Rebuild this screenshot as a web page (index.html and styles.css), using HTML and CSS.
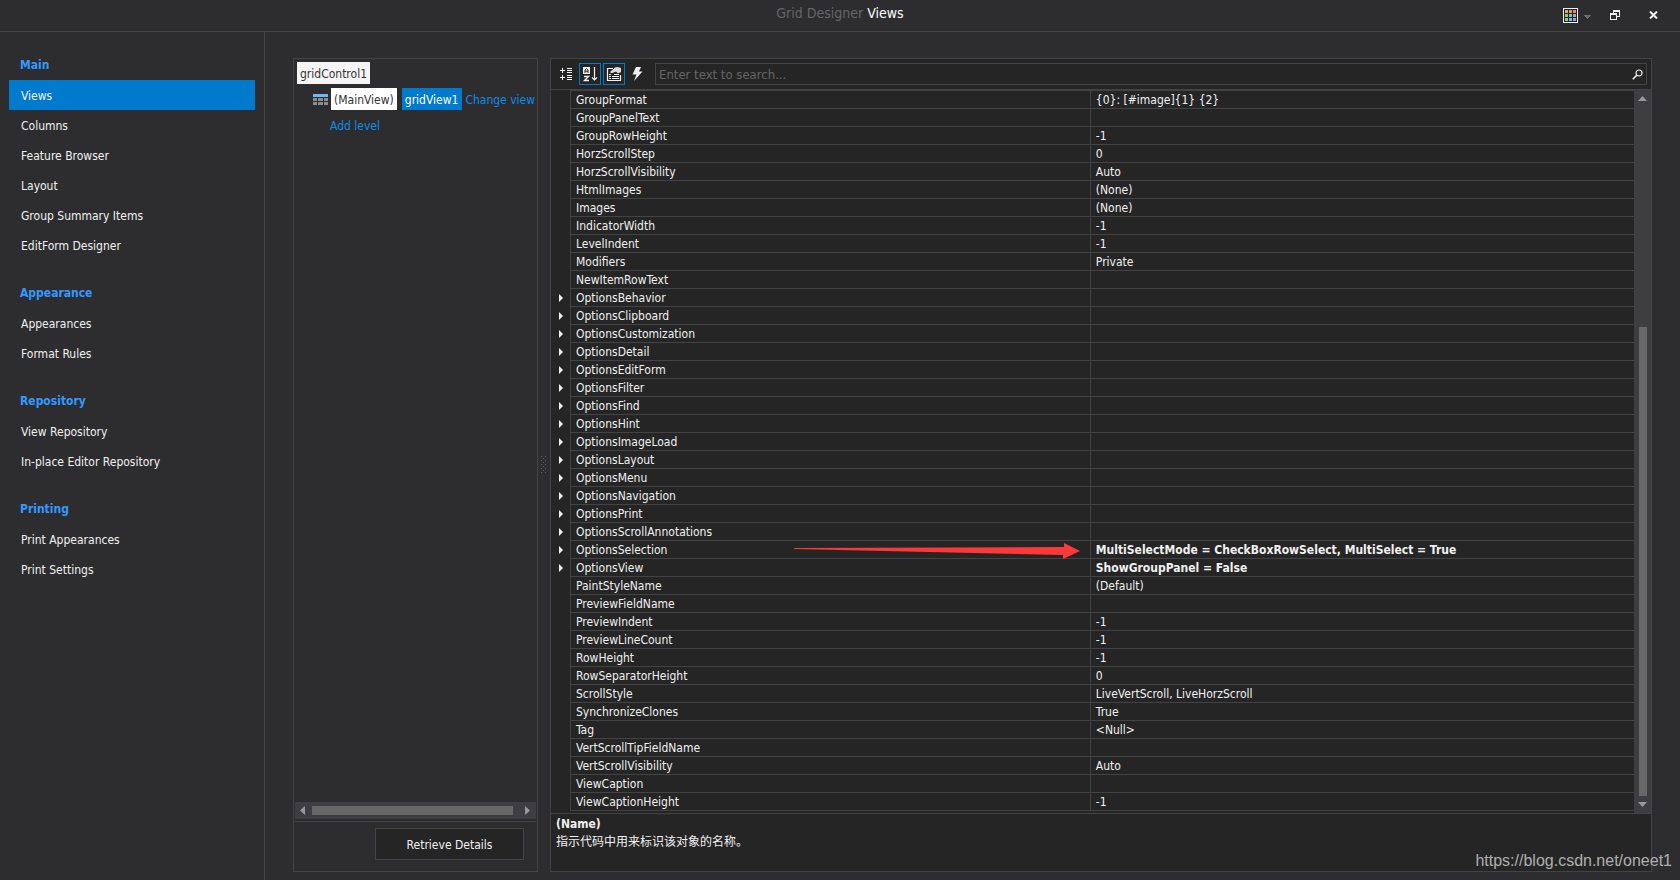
FILE: index.html
```html
<!DOCTYPE html>
<html lang="en">
<head>
<meta charset="utf-8">
<title>Grid Designer Views</title>
<link rel="stylesheet" href="styles.css">
</head>
<body>
<header class="titlebar">
  <h1 class="title"><span class="title-app">Grid Designer</span> Views</h1>
  <div class="window-buttons">
    <button class="skin-button" type="button" aria-label="Skins">
      <svg width="28" height="15" viewBox="0 0 28 15" shape-rendering="crispEdges">
        <rect x=".5" y=".5" width="14" height="14" fill="#252525" stroke="#f1f1f1"/>
        <path fill="#dcaa6c" d="M2 2h3v3H2z"/><path fill="#e09a68" d="M6 2h3v3H6z"/><path fill="#e88878" d="M10 2h3v3h-3z"/>
        <path fill="#b4bc70" d="M2 6h3v3H2z"/><path fill="#74c4b8" d="M6 6h3v3H6z"/><path fill="#a8a0c8" d="M10 6h3v3h-3z"/>
        <path fill="#8cd080" d="M2 10h3v3H2z"/><path fill="#74bcf8" d="M6 10h3v3H6z"/><path fill="#84a8e0" d="M10 10h3v3h-3z"/>
        <path fill="#6a6a6c" d="M21 7h7v1h-1v1h-1v1h-1v1h-1v-1h-1V9h-1V8h-1z"/>
      </svg>
    </button>
    <button class="restore-button" type="button" aria-label="Restore">
      <svg width="10" height="10" viewBox="0 0 10 10" shape-rendering="crispEdges">
        <path fill="#f1f1f1" d="M3 0h7v7H7V6h2V2H4v1H3zM0 3h7v7H0zM1 5v4h5V5z"/>
      </svg>
    </button>
    <button class="close-button" type="button" aria-label="Close">
      <svg width="9" height="8" viewBox="0 0 9 8">
        <path d="M1 .5l7 7M8 .5l-7 7" stroke="#f1f1f1" stroke-width="2"/>
      </svg>
    </button>
  </div>
</header>

<div class="workspace">
  <nav class="sidebar">
    <h2 class="nav-heading">Main</h2>
    <a class="nav-item nav-item-active" href="#">Views</a>
    <a class="nav-item" href="#">Columns</a>
    <a class="nav-item" href="#">Feature Browser</a>
    <a class="nav-item" href="#">Layout</a>
    <a class="nav-item" href="#">Group Summary Items</a>
    <a class="nav-item" href="#">EditForm Designer</a>
    <h2 class="nav-heading">Appearance</h2>
    <a class="nav-item" href="#">Appearances</a>
    <a class="nav-item" href="#">Format Rules</a>
    <h2 class="nav-heading">Repository</h2>
    <a class="nav-item" href="#">View Repository</a>
    <a class="nav-item" href="#">In-place Editor Repository</a>
    <h2 class="nav-heading">Printing</h2>
    <a class="nav-item" href="#">Print Appearances</a>
    <a class="nav-item" href="#">Print Settings</a>
  </nav>

  <main class="content">
    <section class="levels">
      <div class="level-tree">
        <div class="level-root"><button class="chip chip-root" type="button">gridControl1</button></div>
        <div class="level-view">
          <svg class="grid-icon" width="15" height="11" viewBox="0 0 15 11" shape-rendering="crispEdges">
            <path fill="#6cb8fc" d="M0 0h15v3H0z"/>
            <path fill="#8c8c8e" d="M0 4h4v3H0zM5 4h5v3H5zM11 4h4v3h-4zM0 8h4v3H0zM5 8h5v3H5zM11 8h4v3h-4z"/>
          </svg>
          <button class="chip chip-main" type="button">(MainView)</button>
          <button class="chip chip-selected" type="button">gridView1</button>
          <a class="level-link" href="#">Change view</a>
        </div>
        <div class="level-add"><a class="level-link" href="#">Add level</a></div>
      </div>
      <div class="hscroll">
        <svg width="5" height="9" viewBox="0 0 5 9"><path fill="#999" d="M5 0v9L0 4.500z"/></svg>
        <div class="hscroll-track"><div class="hscroll-thumb"></div></div>
        <svg width="5" height="9" viewBox="0 0 5 9"><path fill="#999" d="M0 0v9l5-4.500z"/></svg>
      </div>
      <div class="levels-footer"><button class="retrieve" type="button">Retrieve Details</button></div>
    </section>

    <div class="splitter">
      <svg width="6" height="18" viewBox="0 0 6 18" shape-rendering="crispEdges">
        <path fill="#606064" d="M0 0h1v1H0zM4 0h1v1H4zM2 2h1v1H2zM0 4h1v1H0zM4 4h1v1H4zM2 6h1v1H2zM0 8h1v1H0zM4 8h1v1H4zM2 10h1v1H2zM0 12h1v1H0zM4 12h1v1H4zM2 14h1v1H2zM0 16h1v1H0zM4 16h1v1H4z"/>
      </svg>
    </div>

    <section class="properties">
      <div class="toolbar">
        <button class="tool" type="button" aria-label="Categorized">
          <svg width="16" height="16" viewBox="0 0 16 16" shape-rendering="crispEdges">
            <path fill="#f1f1f1" d="M4 2h1v2h2v1H5v2H4V5H2V4h2zM4 9h1v2h2v1H5v2H4v-2H2v-1h2zM9 2h5v1H9zM9 4h5v1H9zM9 6h5v1H9zM9 9h5v1H9zM9 11h5v1H9zM9 13h5v1H9z"/>
          </svg>
        </button>
        <button class="tool tool-on" type="button" aria-label="Alphabetical">
          <svg width="16" height="16" viewBox="0 0 16 16">
            <path fill="#f1f1f1" d="M1 1h7v7H1z"/>
            <path d="M3 7V4L4.500 2.500 6 4v3M3 5.200h3" fill="none" stroke="#252525"/>
            <path d="M2 10.500h4.500L2.500 14.500H7" fill="none" stroke="#f1f1f1" stroke-width="1.400"/>
            <path d="M12.500 1v13M10 11.500l2.500 2.500 2.500-2.500" fill="none" stroke="#f1f1f1" stroke-width="1.200"/>
          </svg>
        </button>
        <button class="tool tool-on" type="button" aria-label="Property description">
          <svg width="16" height="16" viewBox="0 0 16 16">
            <path d="M7 2.500H1.500v12h13V9" fill="none" stroke="#f1f1f1" stroke-width="1.200"/>
            <path d="M3 8h2v1H3zM8 8h5v1H8zM3 10h2v1H3zM6 10h7v1H6zM3 12h2v1H3zM6 12h7v1H6z" fill="#f1f1f1"/>
            <path d="M4 6l5-4.500 2.500-.5L15 2v4l-3 1.500-2-2L6.500 7 5 7z" fill="#dcdcdc"/>
          </svg>
        </button>
        <button class="tool" type="button" aria-label="Events">
          <svg width="16" height="16" viewBox="0 0 16 16">
            <path d="M6 1H11L9 5.500h3.500L4 15l2.500-6.500H2.500z" fill="#f1f1f1"/>
          </svg>
        </button>
        <div class="search">
          <input class="search-input" type="text" placeholder="Enter text to search..." aria-label="Search properties">
          <svg width="11" height="11" viewBox="0 0 11 11">
            <circle cx="7" cy="4" r="3" fill="none" stroke="#f1f1f1" stroke-width="1.200"/>
            <path d="M5 6L.8 10.200" stroke="#f1f1f1" stroke-width="1.600"/>
          </svg>
        </div>
      </div>

      <div class="grid-area">
        <table class="grid">
          <colgroup><col class="col-mark"><col class="col-name"><col></colgroup>
          <tbody>
            <tr><td></td><th>GroupFormat</th><td>{0}: [#image]{1} {2}</td></tr>
            <tr><td></td><th>GroupPanelText</th><td></td></tr>
            <tr><td></td><th>GroupRowHeight</th><td>-1</td></tr>
            <tr><td></td><th>HorzScrollStep</th><td>0</td></tr>
            <tr><td></td><th>HorzScrollVisibility</th><td>Auto</td></tr>
            <tr><td></td><th>HtmlImages</th><td>(None)</td></tr>
            <tr><td></td><th>Images</th><td>(None)</td></tr>
            <tr><td></td><th>IndicatorWidth</th><td>-1</td></tr>
            <tr><td></td><th>LevelIndent</th><td>-1</td></tr>
            <tr><td></td><th>Modifiers</th><td>Private</td></tr>
            <tr><td></td><th>NewItemRowText</th><td></td></tr>
            <tr class="expandable"><td></td><th>OptionsBehavior</th><td></td></tr>
            <tr class="expandable"><td></td><th>OptionsClipboard</th><td></td></tr>
            <tr class="expandable"><td></td><th>OptionsCustomization</th><td></td></tr>
            <tr class="expandable"><td></td><th>OptionsDetail</th><td></td></tr>
            <tr class="expandable"><td></td><th>OptionsEditForm</th><td></td></tr>
            <tr class="expandable"><td></td><th>OptionsFilter</th><td></td></tr>
            <tr class="expandable"><td></td><th>OptionsFind</th><td></td></tr>
            <tr class="expandable"><td></td><th>OptionsHint</th><td></td></tr>
            <tr class="expandable"><td></td><th>OptionsImageLoad</th><td></td></tr>
            <tr class="expandable"><td></td><th>OptionsLayout</th><td></td></tr>
            <tr class="expandable"><td></td><th>OptionsMenu</th><td></td></tr>
            <tr class="expandable"><td></td><th>OptionsNavigation</th><td></td></tr>
            <tr class="expandable"><td></td><th>OptionsPrint</th><td></td></tr>
            <tr class="expandable"><td></td><th>OptionsScrollAnnotations</th><td></td></tr>
            <tr class="expandable"><td></td><th class="pointed">OptionsSelection<svg class="pointer" width="286" height="16" viewBox="0 0 286 16"><path fill="#fc3838" d="M0 5l270-1V0l16 8-17 8v-4L0 6z"/></svg></th><td class="changed">MultiSelectMode = CheckBoxRowSelect, MultiSelect = True</td></tr>
            <tr class="expandable"><td></td><th>OptionsView</th><td class="changed">ShowGroupPanel = False</td></tr>
            <tr><td></td><th>PaintStyleName</th><td>(Default)</td></tr>
            <tr><td></td><th>PreviewFieldName</th><td></td></tr>
            <tr><td></td><th>PreviewIndent</th><td>-1</td></tr>
            <tr><td></td><th>PreviewLineCount</th><td>-1</td></tr>
            <tr><td></td><th>RowHeight</th><td>-1</td></tr>
            <tr><td></td><th>RowSeparatorHeight</th><td>0</td></tr>
            <tr><td></td><th>ScrollStyle</th><td>LiveVertScroll, LiveHorzScroll</td></tr>
            <tr><td></td><th>SynchronizeClones</th><td>True</td></tr>
            <tr><td></td><th>Tag</th><td>&lt;Null&gt;</td></tr>
            <tr><td></td><th>VertScrollTipFieldName</th><td></td></tr>
            <tr><td></td><th>VertScrollVisibility</th><td>Auto</td></tr>
            <tr><td></td><th>ViewCaption</th><td></td></tr>
            <tr><td></td><th>ViewCaptionHeight</th><td>-1</td></tr>
          </tbody>
        </table>
        <div class="vscroll">
          <div class="vscroll-end"><svg width="9" height="5" viewBox="0 0 9 5"><path fill="#999" d="M0 5h9L4.500 0z"/></svg></div>
          <div class="vscroll-track"><div class="vscroll-thumb"></div></div>
          <div class="vscroll-end"><svg width="9" height="5" viewBox="0 0 9 5"><path fill="#999" d="M0 0h9L4.500 5z"/></svg></div>
        </div>
      </div>

      <div class="description">
        <strong class="description-name">(Name)</strong>
        <p class="description-text" lang="zh-CN">指示代码中用来标识该对象的名称。</p>
      </div>
    </section>
  </main>
</div>
<div class="watermark">https://blog.csdn.net/oneet1</div>
</body>
</html>
```
FILE: styles.css
```css
* { box-sizing: border-box; }

body {
  margin: 0;
  min-height: 100vh;
  display: flex;
  flex-direction: column;
  position: relative;
  background: #2d2d30;
  color: #f1f1f1;
  font: 12px/18px "DejaVu Sans Condensed", "Noto Sans CJK SC", sans-serif;
}

svg { display: block; flex: none; }
a { text-decoration: none; }
button {
  font: inherit;
  color: inherit;
  background: none;
  border: 0;
  padding: 0;
}

/* Title bar */
.titlebar {
  display: grid;
  grid-template-columns: 1fr auto 1fr;
  align-items: center;
  height: 32px;
  padding-bottom: 6px;
  border-bottom: 1px solid #434346;
}
.title {
  grid-column: 2;
  margin: 0;
  font-size: 14px;
  font-weight: 400;
  color: #fff;
}
.title-app { color: #656565; }
.window-buttons {
  display: flex;
  justify-content: flex-end;
  align-items: center;
  padding: 5px 22px 0 0;
}
.restore-button { margin-left: 19px; }
.close-button { margin-left: 29px; }

.workspace { flex: 1; display: flex; }

/* Navigation */
.sidebar {
  flex: none;
  width: 265px;
  padding: 0 9px;
  border-right: 1px solid #434346;
}
.nav-heading {
  margin: 0;
  padding: 18px 11px 0;
  font-size: 12px;
  line-height: 30px;
  color: #3399ff;
}
.nav-item {
  display: block;
  padding: 2px 12px 0;
  line-height: 28px;
  color: #f1f1f1;
}
.nav-item-active { background: #007acc; }

.content {
  flex: 1;
  min-width: 0;
  display: flex;
  padding: 26px 28px 8px;
}

/* Level tree */
.levels {
  flex: none;
  width: 245px;
  display: flex;
  flex-direction: column;
  border: 1px solid #434346;
}
.level-tree {
  flex: 1;
  display: flex;
  flex-direction: column;
  gap: 4px;
  padding: 3px 0 0 3px;
}
.level-view { display: flex; align-items: center; }
.level-add { padding-left: 33px; line-height: 22px; }
.grid-icon { margin: 0 3px 0 16px; }
.chip {
  height: 22px;
  padding: 2px 3px 0;
  white-space: nowrap;
}
.chip-root { background: #f5f5f5; color: #333; }
.chip-main { background: #fff; color: #333; }
.chip-selected {
  margin: 0 3px 0 5px;
  padding-right: 4px;
  background: #007acc;
  color: #fff;
}
.level-link {
  display: block;
  padding-top: 2px;
  line-height: 20px;
  color: #0e8ce4;
  white-space: nowrap;
}

.hscroll {
  display: flex;
  align-items: center;
  justify-content: space-between;
  height: 17px;
  margin: 0 1px 2px;
  padding: 0 6px 0 5px;
  background: #3e3e42;
}
.hscroll-track { flex: 1; margin: 0 12px 0 7px; }
.hscroll-thumb { width: 100%; height: 9px; background: #686868; }
.levels-footer {
  display: flex;
  justify-content: flex-end;
  margin: 0 1px;
  padding: 6px 12px 11px;
  border-top: 1px solid #434346;
}
.retrieve {
  width: 149px;
  height: 32px;
  padding-top: 2px;
  border: 1px solid #434346;
  background: #252525;
}

.splitter {
  flex: none;
  width: 12px;
  display: flex;
  align-items: center;
  justify-content: center;
}

/* Property grid */
.properties {
  flex: 1;
  min-width: 0;
  display: flex;
  flex-direction: column;
  border: 1px solid #434346;
  background: #252525;
}
.toolbar {
  display: flex;
  gap: 2px;
  padding: 4px;
  border-bottom: 1px solid #434346;
}
.tool {
  width: 22px;
  height: 22px;
  display: grid;
  place-items: center;
  border: 1px solid transparent;
}
.tool-on { border-color: #007acc; }
.search {
  flex: 1;
  display: flex;
  align-items: center;
  height: 22px;
  margin-left: 4px;
  padding-right: 3px;
  border: 1px solid #434346;
}
.search-input {
  flex: 1;
  min-width: 0;
  height: 20px;
  padding: 1px 3px 0;
  border: 0;
  outline: 0;
  background: none;
  color: #f1f1f1;
  font: inherit;
  font-size: 13px;
}
.search-input::placeholder { color: #656565; }

.grid-area { flex: 1; display: flex; align-items: stretch; }
.grid {
  flex: 1;
  min-width: 0;
  table-layout: fixed;
  align-self: flex-start;
  border-spacing: 0;
  margin-bottom: 2px;
}
.col-mark { width: 19px; }
.col-name { width: 48%; }
.grid td,
.grid th {
  height: 18px;
  padding: 2px 5px 0;
  border-left: 1px solid #434346;
  border-bottom: 1px solid #434346;
  line-height: 15px;
  font-weight: 400;
  text-align: left;
  white-space: nowrap;
}
.grid tr:first-child > * { border-top: 1px solid #434346; }
.grid tr > td:first-child { border: 0; padding: 0 0 0 8px; }
.expandable > td:first-child::before {
  content: "";
  display: block;
  width: 0;
  border: 4px solid transparent;
  border-left-color: #f1f1f1;
  border-right: 0;
}
.grid .changed { font-weight: 700; }
.pointed { position: relative; }
.pointer { position: absolute; top: 2px; right: 10px; }

.vscroll {
  flex: none;
  width: 17px;
  display: flex;
  flex-direction: column;
  background: #3e3e40;
}
.vscroll-end {
  height: 17px;
  display: grid;
  place-items: center;
  background: #3e3e42;
}
.vscroll-track {
  flex: 1;
  display: flex;
  flex-direction: column;
  justify-content: flex-end;
  align-items: center;
}
.vscroll-thumb { width: 8px; height: 68%; background: #686868; }

.description {
  min-height: 58px;
  padding: 1px 5px;
  border-top: 1px solid #434346;
}
.description-name { display: block; }
.description-text { margin: 0; }

.watermark {
  position: absolute;
  right: 8px;
  bottom: 9px;
  font: 16px/20px "Liberation Sans", sans-serif;
  color: #b0b0b0;
}
```
